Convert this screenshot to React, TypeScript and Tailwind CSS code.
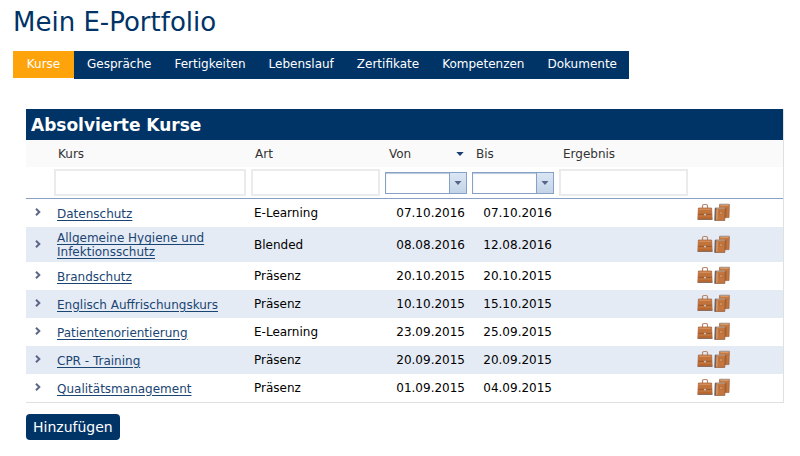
import React from "react";

type Course = {
  name: string;
  kind: string;
  from: string;
  to: string;
};

const tabs = ["Gespräche", "Fertigkeiten", "Lebenslauf", "Zertifikate", "Kompetenzen", "Dokumente"];

const courses: Course[] = [
  { name: "Datenschutz", kind: "E-Learning", from: "07.10.2016", to: "07.10.2016" },
  { name: "Allgemeine Hygiene und Infektionsschutz", kind: "Blended", from: "08.08.2016", to: "12.08.2016" },
  { name: "Brandschutz", kind: "Präsenz", from: "20.10.2015", to: "20.10.2015" },
  { name: "Englisch Auffrischungskurs", kind: "Präsenz", from: "10.10.2015", to: "15.10.2015" },
  { name: "Patientenorientierung", kind: "E-Learning", from: "23.09.2015", to: "25.09.2015" },
  { name: "CPR - Training", kind: "Präsenz", from: "20.09.2015", to: "20.09.2015" },
  { name: "Qualitätsmanagement", kind: "Präsenz", from: "01.09.2015", to: "04.09.2015" },
];

function Chevron() {
  return (
    <svg viewBox="0 0 6 8" className="h-2 w-1.5" aria-hidden="true">
      <path d="M1 0.8 L4.3 4 L1 7.2" fill="none" stroke="#5c6788" strokeWidth="2" />
    </svg>
  );
}

function Briefcase() {
  return (
    <svg viewBox="0 0 16 18" className="h-[18px] w-4" aria-hidden="true">
      <path d="M5.5 5.5 V3 Q5.5 1.5 7 1.5 H9 Q10.5 1.5 10.5 3 V5.5" fill="none" stroke="#b98468" strokeWidth="1.2" />
      <path d="M1.4 5 H14.6 L15.2 16.2 H0.8 Z" fill="#c2733a" stroke="#a4623c" strokeWidth="0.7" />
      <path d="M2.2 6.2 H13.8" stroke="#dc9c6b" strokeWidth="1" />
      <path d="M1.4 11.3 H14.6" stroke="#8f4d26" strokeWidth="0.8" />
      <path d="M1.3 15 H14.7" stroke="#b3612b" strokeWidth="1.2" />
      <rect x="0.6" y="16.1" width="14.8" height="0.9" fill="#86685a" />
      <rect x="6.9" y="10.5" width="2.2" height="2.2" rx="0.8" fill="#e2d6c9" stroke="#80583e" strokeWidth="0.4" />
    </svg>
  );
}

function Books() {
  return (
    <svg viewBox="0 0 16 18" className="h-[18px] w-4" aria-hidden="true">
      <path d="M5.6 1.3 H15.4 L15 14.6 H5 Z" fill="#c4763e" stroke="#a4623c" strokeWidth="0.7" />
      <path d="M5.6 0.9 H15.2 V2 H5.6 Z" fill="#a99a90" />
      <path d="M6.4 2.6 H14.6" stroke="#e0a374" strokeWidth="0.8" />
      <path d="M11.9 4.6 V14.4" stroke="#8d5537" strokeWidth="0.7" />
      <path d="M1.2 5.2 H11.2 L10.8 17.4 H0.8 Z" fill="#c4763e" stroke="#8d5537" strokeWidth="0.7" />
      <path d="M1.2 4.6 H11.2 V5.6 H1.2 Z" fill="#b8aaa0" />
      <path d="M1 5 H2.4 L2 17.4 H0.6 Z" fill="#6b6360" />
      <path d="M3.1 6.4 L2.8 16.8" stroke="#e0b48f" strokeWidth="0.8" />
      <rect x="5.4" y="8.4" width="3.2" height="3.2" fill="#d28e57" stroke="#a6602f" strokeWidth="0.5" />
    </svg>
  );
}

function TextFilter({ label }: { label: string }) {
  return (
    <input
      type="text"
      aria-label={label}
      className="block h-[27px] w-full border-2 border-[#ebebeb] bg-white px-1 text-xs"
    />
  );
}

function DateFilter({ label }: { label: string }) {
  return (
    <div className="relative">
      <select
        aria-label={label}
        className="block h-[22px] w-full appearance-none border border-[#87a0c6] bg-white pr-5 pl-1 text-xs shadow-[inset_0_1px_1px_#b9c8de]"
      >
        <option value=""></option>
      </select>
      <span className="pointer-events-none absolute top-0 right-0 flex h-full w-[18px] items-center justify-center border border-[#87a0c6] bg-linear-to-b from-[#dbe6f3] to-[#c3d4e8]">
        <svg viewBox="0 0 8 4" className="h-1 w-2" aria-hidden="true">
          <path d="M0.5 0 H7.5 L4 4 Z" fill="#56648c" />
        </svg>
      </span>
    </div>
  );
}

export default function App() {
  return (
    <main className="px-[13px] pt-2 font-['DejaVu_Sans','Verdana',sans-serif] text-xs text-black">
      <h1 className="text-[26px] leading-7 text-[#003366]">Mein E-Portfolio</h1>

      <nav className="mt-[15px] flex items-start text-white">
        <a href="#" aria-current="page" className="w-[61px] bg-[#ffa30a] text-center leading-[27px]">
          Kurse
        </a>
        <ul className="flex gap-[23px] bg-[#003366] pr-3 pb-0.5 pl-[13px] leading-[26px]">
          {tabs.map((tab) => (
            <li key={tab}>
              <a href="#">{tab}</a>
            </li>
          ))}
        </ul>
      </nav>

      <section className="mt-[30px] ml-[13px]">
        <div className="mr-[3px] border-r border-b border-[#e0e0e0]">
          <h2 className="bg-[#003366] px-[5px] pt-0.5 text-[17px] leading-[29px] font-bold text-white">
            Absolvierte Kurse
          </h2>
          <table className="w-full table-fixed border-separate border-spacing-0">
            <colgroup>
              <col className="w-6" />
              <col className="w-[200px]" />
              <col className="w-[134px]" />
              <col className="w-[87px]" />
              <col className="w-[87px]" />
              <col className="w-[134px]" />
              <col />
            </colgroup>
            <thead>
              <tr className="h-[27px] bg-[#fafafa] text-left text-[#333]">
                <td></td>
                <th scope="col" className="px-2 font-normal">Kurs</th>
                <th scope="col" className="px-[5px] font-normal">Art</th>
                <th scope="col" className="pr-[7px] pl-[5px] font-normal" aria-sort="descending">
                  <button type="button" className="flex w-full items-center justify-between">
                    Von
                    <svg viewBox="0 0 8 4" className="h-1 w-2" aria-hidden="true">
                      <path d="M0.3 0 H7.7 L4 4 Z" fill="#1b3f73" />
                    </svg>
                  </button>
                </th>
                <th scope="col" className="px-[5px] font-normal">Bis</th>
                <th scope="col" className="px-[5px] font-normal">Ergebnis</th>
                <td></td>
              </tr>
              <tr className="h-8 *:border-b *:border-[#87a0c6]">
                <td></td>
                <td className="pr-1 pl-1"><TextFilter label="Kurs" /></td>
                <td className="pr-1 pl-px"><TextFilter label="Art" /></td>
                <td className="pr-1 pl-px"><DateFilter label="Von" /></td>
                <td className="pr-1 pl-px"><DateFilter label="Bis" /></td>
                <td className="pr-1 pl-px"><TextFilter label="Ergebnis" /></td>
                <td></td>
              </tr>
            </thead>
            <tbody>
              {courses.map((c) => (
                <tr key={c.name} className="h-7 even:bg-[#e5ebf5]">
                  <td>
                    <button type="button" aria-label={`${c.name} aufklappen`} className="ml-[9px] block pb-0.5">
                      <Chevron />
                    </button>
                  </td>
                  <td className="pt-1 pr-8 pb-[3px] pl-[7px] leading-[14px]">
                    <a href="#" className="text-[#1a4573] underline underline-offset-2">{c.name}</a>
                  </td>
                  <td className="px-1">{c.kind}</td>
                  <td className="pr-[6px] text-right">{c.from}</td>
                  <td className="pr-[6px] text-right">{c.to}</td>
                  <td></td>
                  <td>
                    <div className="ml-[5px] flex gap-px pb-0.5">
                      <button type="button" aria-label="Portfolio"><Briefcase /></button>
                      <button type="button" aria-label="Unterlagen"><Books /></button>
                    </div>
                  </td>
                </tr>
              ))}
            </tbody>
          </table>
        </div>
        <button type="button" className="mt-[11px] rounded bg-[#003366] px-[7px] pt-px text-sm leading-[25px] text-white">
          Hinzufügen
        </button>
      </section>
    </main>
  );
}
